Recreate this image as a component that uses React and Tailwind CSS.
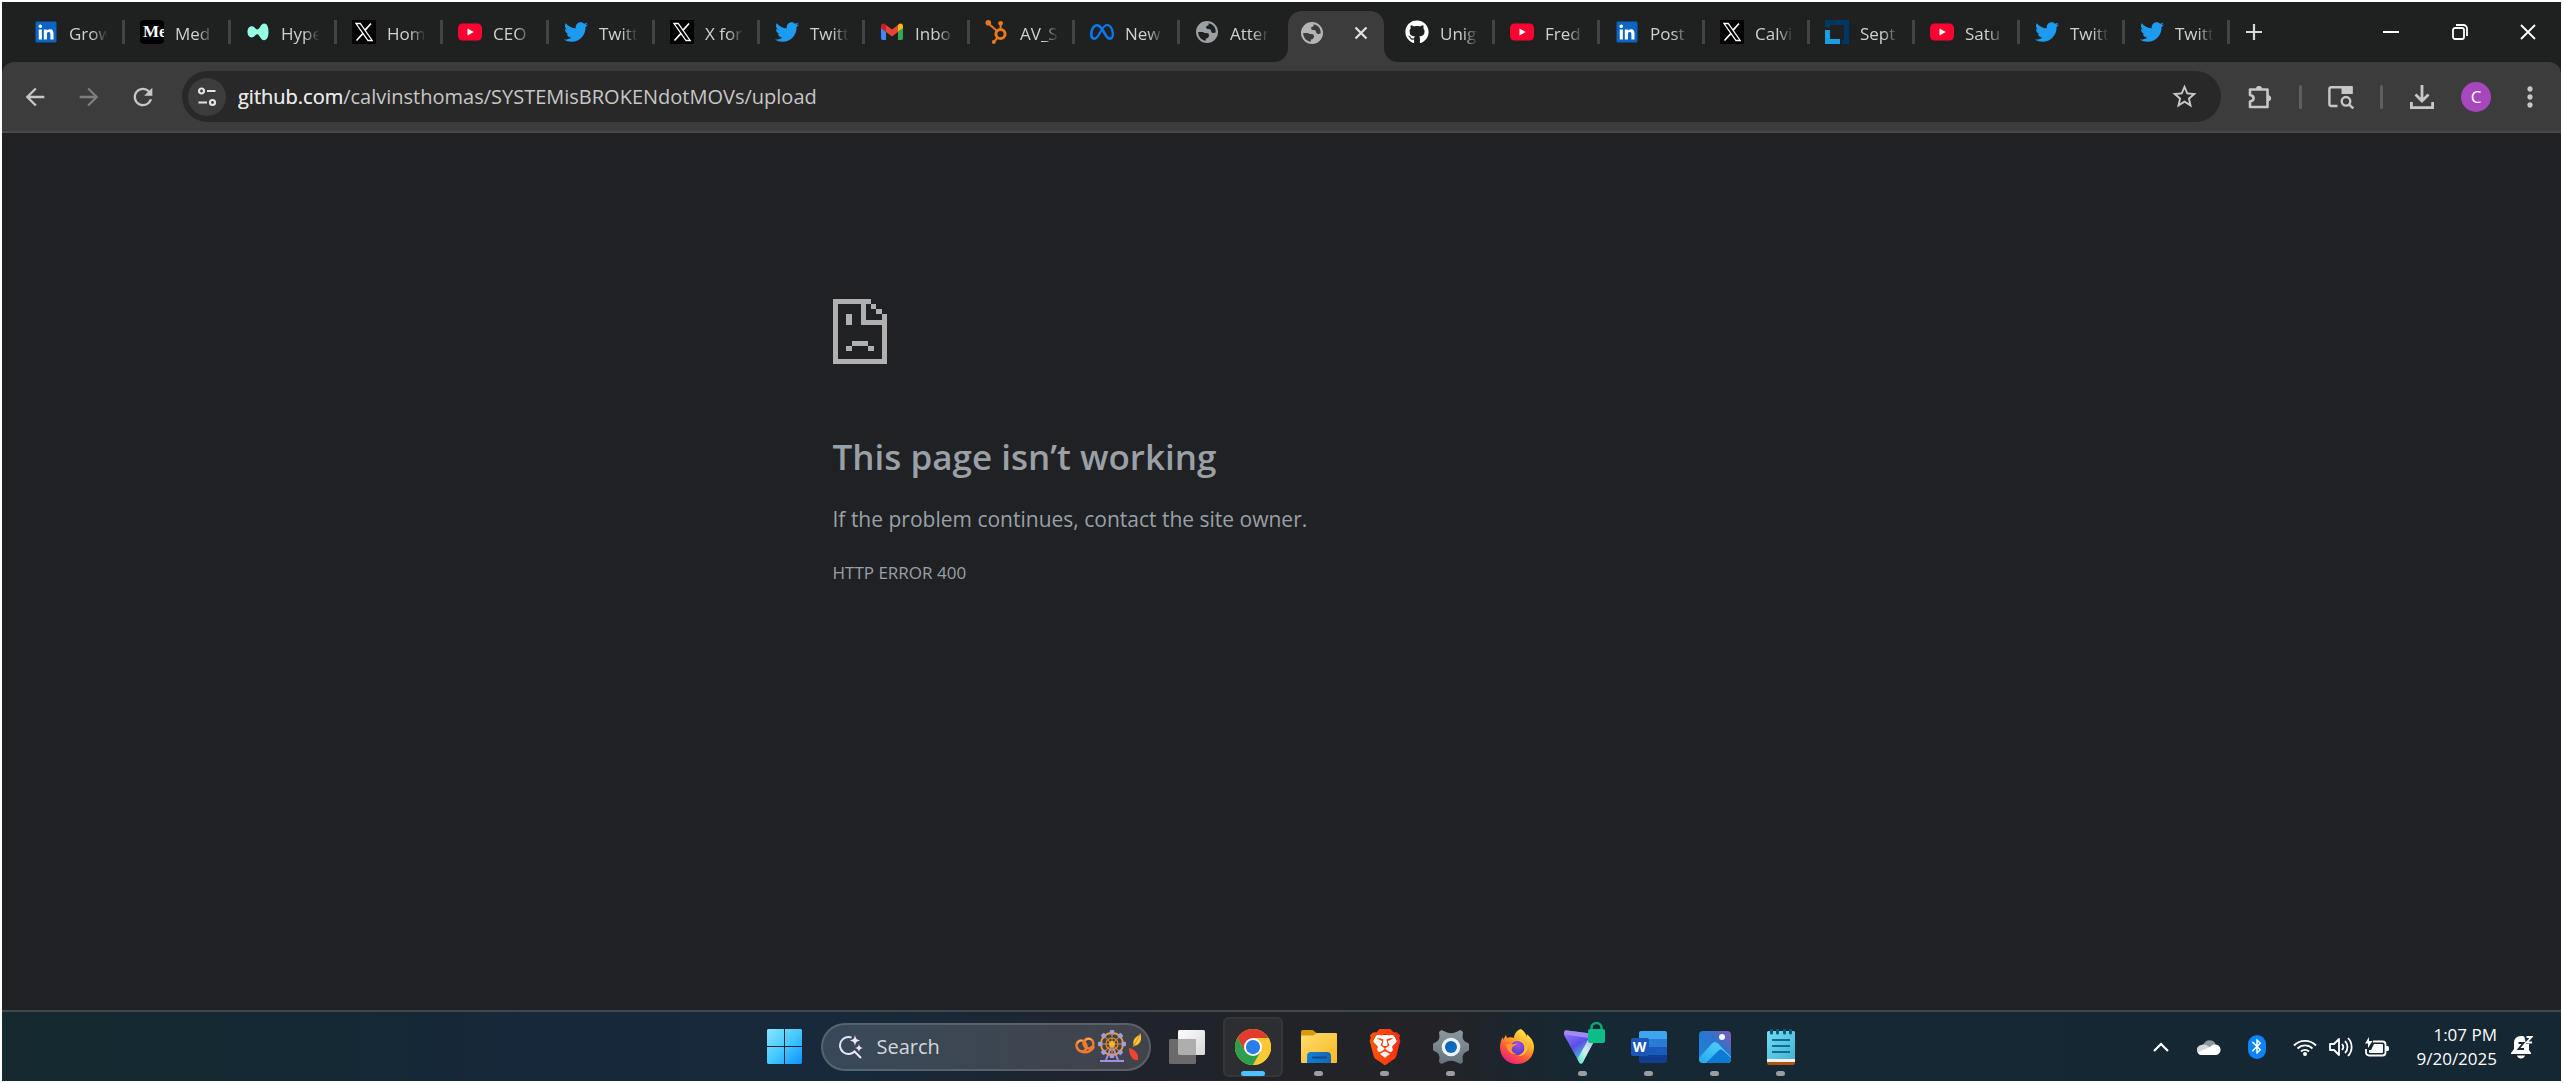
import React from "react";
import { FaLinkedin, FaTwitter, FaMeta, FaGithub } from "react-icons/fa6";
import { SiBrave } from "react-icons/si";
import {
  MdArrowBack, MdArrowForward, MdRefresh, MdStarOutline,
  MdMoreVert, MdBluetooth,
} from "react-icons/md";

/* ---------- favicons ---------- */

const LinkedIn = () => (
  <span className="flex size-6 items-center justify-center">
    <svg viewBox="0 0 24 24" className="size-6">
      <rect x="4" y="4" width="16" height="16" fill="#fff" />
      <FaLinkedin x="0" y="0" size={24} color="#0a66c2" />
    </svg>
  </span>
);

const Medium = () => (
  <span className="flex size-6 items-center overflow-hidden rounded bg-black pl-[3px] font-[Liberation_Serif,serif] text-[17px] leading-6 font-bold text-white">
    Me
  </span>
);

const Hyper = () => (
  <svg viewBox="0 0 24 24" className="size-6">
    <path
      fill="#97fce4"
      d="M22.500 11.800c0 5.200-1.500 8.400-4.400 8.400-3.700 0-4.300-6-6.900-6-2.200 0-2.200 3.200-5.400 3.200C3.200 17.400 1.500 15 1.500 11.700c0-3.400 1.800-5.500 4.300-5.500 3 0 3.300 3.200 5.500 3.200 2.700 0 3.200-5.800 6.900-5.800 2.800 0 4.300 3.200 4.300 8.200z"
    />
  </svg>
);

const XLogo = () => (
  <svg viewBox="0 0 24 24" className="size-6">
    <rect width="24" height="24" fill="#000" />
    <g fill="none" stroke="#fff" strokeWidth="1.300">
      <path d="M4 3.500h4.200l12 17h-4.200z" />
      <path d="M19 3.500 12.900 10.400M11 13.400 4.500 20.500" strokeWidth="1.600" />
    </g>
  </svg>
);

const YouTube = () => (
  <svg viewBox="0 0 24 24" className="size-6">
    <rect y="3.500" width="24" height="17" rx="4.500" fill="#ff0033" />
    <path d="M9.500 8.400v7.200l6.300-3.600z" fill="#fff" />
  </svg>
);

const Twitter = () => <FaTwitter size={24} color="#1d9bf0" />;

const Gmail = () => (
  <svg viewBox="0 0 24 24" className="size-6">
    <path d="M1 7v11.300c0 1 .8 1.700 1.700 1.700H6V11z" fill="#4285f4" />
    <path d="M18 11v9h3.300c1 0 1.700-.8 1.700-1.700V7z" fill="#34a853" />
    <path d="M18 5v6.500L23 8V6c0-2.300-2.300-3.300-4-2z" fill="#fbbc04" />
    <path d="M6 12V5l6 4.600L18 5v7l-6 4.500z" fill="#ea4335" />
    <path d="M1 6v2l5 4V5L5 4C3.300 2.700 1 3.700 1 6z" fill="#c5221f" />
  </svg>
);

const HubSpot = () => (
  <svg viewBox="0 0 24 24" className="size-6" fill="none" stroke="#e8791c">
    <circle cx="15.500" cy="14" r="4.600" strokeWidth="3" />
    <path d="M15.600 9V4M12 11 4 4M12.300 18l-3.500 4" strokeWidth="2" />
    <g fill="#e8791c" stroke="none">
      <circle cx="3.300" cy="2.800" r="2.800" />
      <circle cx="15.600" cy="3.300" r="2.400" />
      <circle cx="8.800" cy="22" r="2" />
    </g>
  </svg>
);

const Meta = () => <FaMeta size={24} color="#0a78f1" />;
const GitHub = () => <FaGithub size={24} color="#ffffff" />;

const Globe = () => (
  <svg viewBox="-1 -1 24 24" className="size-6" fill="currentColor" fillRule="evenodd">
    <path d="M11 0a11 11 0 1 1 0 22 11 11 0 0 1 0-22zM12.500 2.200c.6 1.200 0 2.300-1.300 2.600-1 .3-1.200 1-1 2 .1.900 1 1.200 2.300 1.200 1.700 0 2.500.8 2.700 2.200.3 1.700 2 2.300 4.500 1.300C20 6.500 17 3 12.500 2.200zM2.200 11c0 4.600 3.300 8.200 7.600 8.800v-2.200c2.200-.2 3.200-1.300 3.200-3.300 0-1.500-.9-2.300-2.600-2.300H8.500l-1.500-1z" />
  </svg>
);

const Squares = () => (
  <svg viewBox="0 0 24 24" className="size-6">
    <path d="M0 0h24v24h-7v-4h2V5H5v2H0z" fill="#003764" />
    <path d="M0 10h5v9h10v5H0z" fill="#1b9de2" />
  </svg>
);

/* ---------- tabs ---------- */

const TABS = [
  { icon: LinkedIn, label: "Grow", wide: true },
  { icon: Medium, label: "Med", wide: true },
  { icon: Hyper, label: "Hype", wide: true },
  { icon: XLogo, label: "Hom", wide: true },
  { icon: YouTube, label: "CEO", wide: true },
  { icon: Twitter, label: "Twitt", wide: true },
  { icon: XLogo, label: "X for" },
  { icon: Twitter, label: "Twitt" },
  { icon: Gmail, label: "Inbo" },
  { icon: HubSpot, label: "AV_S" },
  { icon: Meta, label: "New" },
  { icon: Globe, label: "Atter", bare: true },
  { icon: Globe, label: "", active: true },
  { icon: GitHub, label: "Unig" },
  { icon: YouTube, label: "Fred" },
  { icon: LinkedIn, label: "Post" },
  { icon: XLogo, label: "Calvi" },
  { icon: Squares, label: "Sept" },
  { icon: YouTube, label: "Satu" },
  { icon: Twitter, label: "Twitt" },
  { icon: Twitter, label: "Twitt" },
];

function Tab({ icon: Icon, label, wide, bare }) {
  return (
    <div className={`flex shrink-0 items-center ${wide ? "w-[106px]" : "w-[105px]"}`}>
      <button className="flex min-w-0 flex-1 items-center pl-[15px] text-[#9aa0a6]">
        <span className="flex size-6 shrink-0 items-center justify-center">
          <Icon />
        </span>
        <span className="mt-1 ml-[11px] w-[42px] text-left text-[17px] leading-6 whitespace-nowrap text-[#cfd1d0] [mask-image:linear-gradient(to_right,black_55%,transparent_92%)]">
          {label}
        </span>
      </button>
      <span className={`h-6 w-[3px] ${bare ? "" : "bg-[#434443]"}`} />
    </div>
  );
}

function ActiveTab() {
  return (
    <div className="flex w-[105px] shrink-0 items-end pr-1.5 pl-[3px]">
      <div className="relative flex h-[51px] flex-1 items-center justify-between rounded-t-[14px] bg-[#3c3c3c] pr-4 pb-2 pl-3 text-[#b5b5b5] before:absolute before:bottom-0 before:-left-[28px] before:h-[14px] before:w-[28px] before:rounded-br-[14px] before:shadow-[14px_0_0_0_#3c3c3c] before:[clip-path:inset(0_-14px_0_14px)] after:absolute after:-right-[28px] after:bottom-0 after:h-[14px] after:w-[28px] after:rounded-bl-[14px] after:shadow-[-14px_0_0_0_#3c3c3c] after:[clip-path:inset(0_14px_0_-14px)]">
        <Globe />
        <button aria-label="Close tab">
          <svg viewBox="0 0 14 14" className="size-3.5" stroke="#e3e3e3" strokeWidth="2.200">
            <path d="M1.500 1.500l11 11M12.500 1.500l-11 11" />
          </svg>
        </button>
      </div>
    </div>
  );
}

function TabStrip() {
  return (
    <div className="flex h-[60px] bg-[#1f2120]">
      <div className="flex min-w-0 pl-[17px]">
        {TABS.map((t, i) => (t.active ? <ActiveTab key={i} /> : <Tab key={i} {...t} />))}
        <button aria-label="New tab" className="flex w-12 items-center justify-center">
          <svg viewBox="0 0 16 16" className="size-4" stroke="#d8d8d8" strokeWidth="2.200">
            <path d="M8 0v16M0 8h16" />
          </svg>
        </button>
      </div>
      <div className="ml-auto flex">
        <button aria-label="Minimize" className="flex w-[69px] items-center justify-center">
          <span className="h-0.5 w-4 bg-white" />
        </button>
        <button aria-label="Restore" className="flex w-[69px] items-center justify-center">
          <svg viewBox="0 0 16 16" className="size-4" fill="none" stroke="#fff" strokeWidth="1.800">
            <rect x="1" y="4" width="11" height="11" rx="2" />
            <path d="M4 1h7.500A3.500 3.500 0 0 1 15 4.500V12" />
          </svg>
        </button>
        <button aria-label="Close" className="flex w-[67px] items-center justify-center">
          <svg viewBox="0 0 16 16" className="size-4" stroke="#fff" strokeWidth="1.800">
            <path d="M1 1l14 14M15 1L1 15" />
          </svg>
        </button>
      </div>
    </div>
  );
}

/* ---------- toolbar ---------- */

const ToolButton = ({ label, children }) => (
  <button aria-label={label} className="flex h-12 w-[54px] shrink-0 items-center justify-center text-[#c7c7c7]">
    {children}
  </button>
);

const Divider = () => <span className="mx-3 h-6 w-[3px] shrink-0 rounded bg-[#5f5f5f]" />;

function Toolbar() {
  return (
    <div className="bg-[#1f2120]">
      <div className="flex h-[71px] items-center rounded-t-[12px] border-b-2 border-[#4a4a4a] bg-[#3c3c3c] pr-1 pl-1.5">
        <ToolButton label="Back"><MdArrowBack size={28} /></ToolButton>
        <ToolButton label="Forward"><MdArrowForward size={28} color="#7d7d7d" /></ToolButton>
        <ToolButton label="Reload"><MdRefresh size={28} /></ToolButton>
        <div className="mr-3 ml-3 flex h-[51px] min-w-0 flex-1 items-center rounded-full bg-[#282828] pr-[22px] pl-1.5">
          <button aria-label="View site information" className="flex size-[38px] shrink-0 items-center justify-center rounded-full bg-[#3c3c3c]">
            <svg viewBox="0 0 20 20" className="size-5" fill="none" stroke="#e3e3e3" strokeWidth="2.200">
              <circle cx="4.500" cy="4" r="2.500" />
              <path d="M10 4h8.500M1.500 15.500H10" />
              <circle cx="15.500" cy="15.500" r="2.500" />
            </svg>
          </button>
          <label className="relative ml-3 flex-1 text-[20px] leading-7 text-[#c7c7c7]">
            <input
              aria-label="Address bar"
              readOnly
              className="w-full bg-transparent outline-none"
              value="github.com/calvinsthomas/SYSTEMisBROKENdotMOVs/upload"
            />
            <span aria-hidden="true" className="pointer-events-none absolute inset-y-0 left-0 text-[#e8e8e8]">
              github.com
            </span>
          </label>
          <button aria-label="Bookmark this tab" className="text-[#c7c7c7]">
            <MdStarOutline size={29} />
          </button>
        </div>
        <ToolButton label="Extensions">
          <svg viewBox="0 0 24 24" className="size-6" fill="none" stroke="currentColor" strokeWidth="2.600" strokeLinejoin="round">
            <path d="M2 4.500h17.500v17.500H2v-5.500c2.600-.4 3.600-1.600 3.600-3.300S4.600 10.400 2 10z" />
            <path d="M8.300 4a2.700 2.700 0 0 1 5.400 0z M20 10.600a2.700 2.700 0 0 1 0 5.400z" fill="currentColor" strokeWidth="1" />
          </svg>
        </ToolButton>
        <Divider />
        <ToolButton label="Search with Lens">
          <svg viewBox="0 0 26 24" className="h-6 w-[26px]" fill="none" stroke="currentColor" strokeWidth="2.400">
            <path d="M9.500 21H3.200A1.800 1.800 0 0 1 1.400 19.200V4A1.800 1.800 0 0 1 3.200 2.200h20.300v6.500" />
            <path d="M13.500 2h11v7h-11z" fill="currentColor" stroke="none" />
            <circle cx="18" cy="16.300" r="4.300" />
            <path d="M21 19.300l4.300 4.200" />
          </svg>
        </ToolButton>
        <Divider />
        <ToolButton label="Downloads">
          <svg viewBox="0 0 24 24" className="size-6" fill="none" stroke="currentColor" strokeWidth="2.800">
            <path d="M12 0v15M5.500 9.500 12 16l6.500-6.500M1.400 17v5.600h21.200V17" />
          </svg>
        </ToolButton>
        <ToolButton label="Profile">
          <span className="flex size-[30px] items-center justify-center rounded-full bg-[#a846bd] text-[17px] leading-6 text-white">C</span>
        </ToolButton>
        <ToolButton label="Menu"><MdMoreVert size={32} /></ToolButton>
      </div>
    </div>
  );
}

/* ---------- page ---------- */

function ErrorPage() {
  return (
    <main className="flex-1 bg-[#202124] text-[#9aa0a6]">
      <div className="mx-auto w-full max-w-[898px] pt-[166px]">
        <svg viewBox="0 0 54 65" className="h-[65px] w-[54px]" fill="#b0b0b0" shapeRendering="crispEdges">
          <path d="M0 0h38v5H5v55h44V15h5v50H0z" />
          <path d="M28 0h5v21h21v5H28zM38 5h5v5h-5zM43 10h6v5h-6z" />
          <path d="M13 15h6v11h-6zM19 42h16v5H19zM13 47h6v5h-6zM35 47h6v5h-6z" />
        </svg>
        <h1 className="mt-[69px] text-[35px] leading-[48px] font-semibold">This page isn’t working</h1>
        <p className="mt-[22px] text-[21px] leading-8">If the problem continues, contact the site owner.</p>
        <p className="mt-[26px] text-[17px] leading-6">HTTP ERROR 400</p>
      </div>
    </main>
  );
}

/* ---------- taskbar icons ---------- */

const StartIcon = () => (
  <svg viewBox="0 0 35 35" className="size-[35px]">
    <defs>
      <linearGradient id="win" x1="0" y1="0" x2="35" y2="35" gradientUnits="userSpaceOnUse">
        <stop offset="0" stopColor="#8ae4ff" />
        <stop offset=".5" stopColor="#45c9ff" />
        <stop offset="1" stopColor="#0b93fb" />
      </linearGradient>
    </defs>
    <path fill="url(#win)" d="M1 0h16v17H0V1zM18 0h16l1 1v16H18zM0 18h17v17H1l-1-1zM18 18h17v16l-1 1H18z" />
  </svg>
);

const CopilotSearch = () => (
  <svg viewBox="0 0 24 24" className="size-6">
    <defs>
      <linearGradient id="cs" x1="0" y1="0" x2="24" y2="24" gradientUnits="userSpaceOnUse">
        <stop offset="0" stopColor="#cfe4ff" />
        <stop offset="1" stopColor="#fbe6ff" />
      </linearGradient>
    </defs>
    <path d="M12.500 2.500A8.500 8.500 0 1 0 15.500 16.500L22 23" fill="none" stroke="url(#cs)" strokeWidth="2" />
    <path d="M16 0c.8 4 1.500 4.700 5.500 5.500-4 .8-4.700 1.500-5.500 5.500-.8-4-1.500-4.700-5.500-5.500 4-.8 4.700-1.500 5.500-5.500zM20 9c.6 2.700 1.300 3.400 4 4-2.700.6-3.400 1.300-4 4-.6-2.700-1.300-3.400-4-4 2.700-.6 3.400-1.300 4-4z" fill="#f6e3ff" />
  </svg>
);

const SPOKES = [0, 45, 90, 135, 180, 225, 270, 315];

const Festival = () => (
  <svg viewBox="0 0 66 34" className="h-[34px] w-[66px]">
    <g fill="none" stroke="#f47b2e" strokeWidth="2.600" strokeLinecap="round">
      <ellipse cx="6.500" cy="16" rx="4.800" ry="5.600" transform="rotate(-25 6.500 16)" />
      <ellipse cx="13.500" cy="13.500" rx="4.800" ry="5" transform="rotate(-25 13.500 13.500)" />
      <path d="M8 22c4 1 9-1 10.500-5" />
      <path d="M3 13c.7-2 2-3 4-2.600M11 10c1.500-1.500 3.500-1.500 5-.5" stroke="#ffb05c" strokeWidth="1.300" />
    </g>
    <path d="M31 30 37 15l6 15M25 31h24" fill="none" stroke="#a98ae8" strokeWidth="2" />
    <circle cx="37" cy="14" r="11" fill="none" stroke="#f09a25" strokeWidth="1.800" />
    <circle cx="37" cy="14" r="6" fill="none" stroke="#e58f24" strokeWidth="1.200" />
    {SPOKES.map((a) => (
      <g key={a} transform={`rotate(${a} 37 14)`}>
        <path d="M37 14V3" stroke="#e58f24" strokeWidth="1" />
        <rect x="34.800" y="0" width="4.500" height="4.500" rx="1" fill="#a39be0" />
      </g>
    ))}
    <circle cx="37" cy="14" r="3" fill="#ffb427" />
    <path d="M66 4c1 6-1 11-7 12-2-4 0-9 7-12z" fill="#ffc436" />
    <path d="M66 3 58 17" stroke="#d68a16" />
    <path d="M54 18c6 1 10 6 9 12-5 1-9-4-9-12z" fill="#ee4438" />
  </svg>
);

const TaskView = () => (
  <svg viewBox="0 0 36 34" className="h-[34px] w-9">
    <defs>
      <linearGradient id="tv" x1="0" y1="0" x2="1" y2="1">
        <stop offset="0" stopColor="#fff" />
        <stop offset="1" stopColor="#d6d6d6" />
      </linearGradient>
    </defs>
    <rect x="9" y="0" width="27" height="25" rx="1.500" fill="url(#tv)" />
    <rect x="0" y="9" width="27" height="25" rx="1.500" fill="#6a6a6a" />
    <path d="M9 9h17l1 1v15H10l-1-1z" fill="#aeaeae" />
  </svg>
);

const Chrome = () => (
  <svg viewBox="0 0 48 48" className="size-9">
    <circle cx="24" cy="24" r="24" fill="#fbc934" />
    <path d="M3.200 12A24 24 0 0 1 44.800 12H24l-10.400 18z" fill="#e33b2e" />
    <path d="M3.200 12A24 24 0 0 0 24 48L34.400 30 24 34 13.600 30z" fill="#2f9e4f" />
    <path d="M34.400 30 24 48A24 24 0 0 0 44.800 12H24z" fill="#fbc934" />
    <circle cx="24" cy="24" r="12" fill="#fff" />
    <circle cx="24" cy="24" r="9.500" fill="#2b7de9" />
  </svg>
);

const Explorer = () => (
  <svg viewBox="0 0 36 33" className="h-[33px] w-9">
    <defs>
      <linearGradient id="fo" x1="0" y1="0" x2="1" y2="1">
        <stop offset="0" stopColor="#ffdc70" />
        <stop offset="1" stopColor="#f8b91f" />
      </linearGradient>
      <linearGradient id="fb" x1="0" y1="0" x2="1" y2="0">
        <stop offset="0" stopColor="#0f7fd6" />
        <stop offset="1" stopColor="#1565b5" />
      </linearGradient>
    </defs>
    <path d="M0 2a2 2 0 0 1 2-2h9c2 0 4 3 6 4v6H0z" fill="#db9a0c" />
    <path d="M0 5.500h12l4-2.500h19a1 1 0 0 1 1 1v28a1 1 0 0 1-1 1H1a1 1 0 0 1-1-1z" fill="url(#fo)" />
    <path d="M6 33v-7a4 4 0 0 1 4-4h16a4 4 0 0 1 4 4v7z" fill="url(#fb)" />
    <path d="M12 27.500h13" stroke="#0c4a8a" strokeWidth="2" strokeLinecap="round" />
  </svg>
);

const Brave = () => (
  <svg viewBox="0 0 24 24" className="size-9">
    <defs>
      <linearGradient id="br" x1="0" y1="0" x2="24" y2="0" gradientUnits="userSpaceOnUse">
        <stop offset="0" stopColor="#ff5a00" />
        <stop offset="1" stopColor="#ff2a1a" />
      </linearGradient>
    </defs>
    <path d="M6 4h12l2 4-3 10-5 4-5-4L4 8z" fill="#fff" />
    <SiBrave x="0" y="0" size={24} className="fill-[url(#br)]" />
  </svg>
);

const Settings = () => (
  <svg viewBox="-18 -18 36 36" className="size-9">
    <defs>
      <linearGradient id="gr" x1="0" y1="0" x2="0" y2="1">
        <stop offset="0" stopColor="#8d979f" />
        <stop offset="1" stopColor="#66727c" />
      </linearGradient>
      <linearGradient id="gb" x1="0" y1="0" x2="1" y2="1">
        <stop offset="0" stopColor="#0b5fae" />
        <stop offset="1" stopColor="#0c74c9" />
      </linearGradient>
    </defs>
    <path
      fill="url(#gr)"
      d="M-9.500-17-4-14.500Q0-13 4-14.500L9.500-17 12-15 11.500-10Q12-5.500 17-4L18-3V3L17 4Q12 5.500 11.500 10L12 15 9.500 17 4 14.500Q0 13-4 14.500L-9.500 17-12 15-11.500 10Q-12 5.500-17 4L-18 3V-3L-17-4Q-12-5.500-11.500-10L-12-15z"
    />
    <circle r="9.300" fill="#eef1f3" />
    <circle r="6" fill="url(#gb)" />
  </svg>
);

const Firefox = () => (
  <svg viewBox="0 0 34 35" className="h-[35px] w-[34px]">
    <defs>
      <linearGradient id="f1" x1=".8" y1="0" x2=".2" y2="1">
        <stop offset="0" stopColor="#fff44f" />
        <stop offset=".35" stopColor="#ffb02e" />
        <stop offset=".65" stopColor="#ff5a36" />
        <stop offset="1" stopColor="#e9158a" />
      </linearGradient>
      <radialGradient id="f2" cx=".55" cy=".3" r=".8">
        <stop offset="0" stopColor="#a24bef" />
        <stop offset="1" stopColor="#4a3dc4" />
      </radialGradient>
    </defs>
    <path d="M21 0c3 2 5 5 6 8 0-1 0-2-.500-3C32 9 34 14 34 18c0 10-7 17-17 17S0 28 0 18c0-4 1.500-8 3-10 0 1 0 2 .5 2.500C4.500 8 6 6 6 6l1 3c2-1 5-1 7 0 0-4 3-8 7-9z" fill="url(#f1)" />
    <circle cx="17.500" cy="19" r="7" fill="url(#f2)" />
    <path d="M6 15c3-1 5 1 8 0 2 0 3-1 3.500-2 0 3-3 3.500-5 5-2 3 0 6 4 7-6 1-10-4-10.500-10z" fill="#ff9a32" />
    <path d="M17 11c6-1 9 3 8 8 1-1 2-3 2-5 2 7-2 13-9 13 5-2 8-6 6-11-1-3-4-4-7-5z" fill="#ffc43a" />
  </svg>
);

const Proton = () => (
  <svg viewBox="0 0 42 42" className="size-[42px] overflow-visible">
    <defs>
      <linearGradient id="p1" x1="0" y1="0" x2=".6" y2="1">
        <stop offset="0" stopColor="#9a7bff" />
        <stop offset=".5" stopColor="#5b4fe8" />
        <stop offset="1" stopColor="#3fe0d0" />
      </linearGradient>
      <linearGradient id="p2" x1="1" y1="0" x2="0" y2="1">
        <stop offset="0" stopColor="#b9a4f5" />
        <stop offset=".6" stopColor="#c8f2ee" />
        <stop offset="1" stopColor="#54e3c8" />
      </linearGradient>
    </defs>
    <path d="M2 7c0-2 1-3 3-2.500l24 3c3 .5 5 3 3 6L21 36c-1 2-3 2-4 0L2 9z" fill="url(#p1)" />
    <path d="M34 12 21 36c-1 2-3 2-4 0l-1.500-3L27 12c2-3 5-3 7 0z" fill="url(#p2)" />
    <path d="M5 4.500l24 3c2 1 2 3 1 5L3 8.500c-2-2 0-4 2-4z" fill="#a28af2" />
    <path d="M29.500 4V2a5 5 0 0 1 10 0v2" fill="none" stroke="#0aa874" strokeWidth="2.500" />
    <rect x="26" y="3" width="17" height="14" rx="2" fill="#0bbd86" />
  </svg>
);

const Word = () => (
  <span className="relative flex h-8 w-9 justify-end">
    <span className="flex w-7 flex-col overflow-hidden rounded-[2px]">
      <span className="h-2 bg-[#41a5ee]" />
      <span className="h-2 bg-[#2b7cd3]" />
      <span className="h-2 bg-[#185abd]" />
      <span className="h-2 bg-[#103f91]" />
    </span>
    <span className="absolute top-[7px] left-0 flex size-[18px] items-center justify-center rounded-[2px] bg-[#1a57bd] font-[Open_Sans,sans-serif] text-[14px] leading-none font-bold text-white">
      W
    </span>
  </span>
);

const Photos = () => (
  <svg viewBox="0 0 32 32" className="size-8">
    <defs>
      <linearGradient id="ph" x1="0" y1="1" x2="1" y2="0">
        <stop offset="0" stopColor="#1a86dd" />
        <stop offset=".6" stopColor="#2b74cc" />
        <stop offset="1" stopColor="#8a57b5" />
      </linearGradient>
      <linearGradient id="pm" x1="0" y1="1" x2="1" y2="0">
        <stop offset="0" stopColor="#24a8ef" />
        <stop offset="1" stopColor="#56d8fb" />
      </linearGradient>
      <clipPath id="pc"><rect width="32" height="32" rx="4" /></clipPath>
    </defs>
    <g clipPath="url(#pc)">
      <rect width="32" height="32" fill="url(#ph)" />
      <path d="M0 27 13 12.500c2-2 4-2 6 0L32 26v6H0z" fill="url(#pm)" />
      <path d="M7 32 19.500 19.500c1.500-1.500 3-1.500 4.500 0L32 27v5z" fill="#0f7ad4" />
    </g>
    <circle cx="23" cy="6" r="3" fill="#f4f6ff" />
  </svg>
);

const Notepad = () => (
  <svg viewBox="0 0 28 36" className="h-9 w-7">
    <defs>
      <linearGradient id="np" x1="0" y1="0" x2="1" y2="1">
        <stop offset="0" stopColor="#74dcf4" />
        <stop offset="1" stopColor="#45b3d6" />
      </linearGradient>
    </defs>
    <path d="M0 32h28v2a2 2 0 0 1-2 2H2a2 2 0 0 1-2-2z" fill="#b3530f" />
    <path d="M0 29h28v4H0z" fill="#f2f2f2" />
    <path d="M0 3.500A1.500 1.500 0 0 1 1.500 2h25A1.500 1.500 0 0 1 28 3.500V30H0z" fill="url(#np)" />
    <path d="M5 11h18M5 17h18M5 23h18" stroke="#0f6d8e" strokeWidth="2" />
    <path d="M4.500 1v3M10.500 1v3M17.500 1v3M23.500 1v3" stroke="#0b5873" strokeWidth="3" strokeLinecap="round" />
  </svg>
);

const APPS = [
  { name: "Task View", icon: TaskView },
  { name: "Google Chrome", icon: Chrome, active: true },
  { name: "File Explorer", icon: Explorer, open: true },
  { name: "Brave", icon: Brave, open: true },
  { name: "Settings", icon: Settings, open: true },
  { name: "Firefox", icon: Firefox },
  { name: "Proton VPN", icon: Proton, open: true },
  { name: "Word", icon: Word, open: true },
  { name: "Photos", icon: Photos, open: true },
  { name: "Notepad", icon: Notepad, open: true },
];

/* ---------- taskbar ---------- */

function AppButton({ name, icon: Icon, active, open }) {
  return (
    <button
      aria-label={name}
      className={`relative mx-[3px] flex size-[60px] items-center justify-center rounded-md border-2 ${
        active ? "border-[#36373b] bg-[#2d2e32]" : "border-transparent"
      }`}
    >
      <Icon />
      {active && <span className="absolute -bottom-px h-[5px] w-6 rounded-full bg-[#4cc2ff]" />}
      {open && <span className="absolute -bottom-px h-[5px] w-[9px] rounded-full bg-[#9b9da1]" />}
    </button>
  );
}

function Tray() {
  return (
    <div className="flex items-center justify-end pr-7 text-white">
      <button aria-label="Show hidden icons" className="flex w-12 justify-center">
        <svg viewBox="0 0 16 10" className="h-2.5 w-4" fill="none" stroke="#fff" strokeWidth="2.200">
          <path d="M1 9l7-7 7 7" />
        </svg>
      </button>
      <button aria-label="OneDrive" className="flex w-12 justify-center">
        <svg viewBox="0 0 24 16" className="h-4 w-6">
          <path d="M6.500 5.500A6.500 6.500 0 0 1 18.500 5L17 10 7 8z" fill="#8f9aa0" />
          <path d="M5 16a5 5 0 0 1-.5-10c3-1 5 0 7 1.500L20 12l-3 4z" fill="#d5d9db" />
          <path d="M17.500 5.500A5.300 5.300 0 0 1 19 16H5c-2 0-3.500-1-4.300-2.500L13 8c1.500-1.500 3-2.500 4.500-2.500z" fill="#fff" />
        </svg>
      </button>
      <button aria-label="Bluetooth" className="flex w-12 justify-center">
        <span className="flex h-6 w-[18px] items-center justify-center rounded-[9px] bg-[#0a84ff]">
          <MdBluetooth size={21} />
        </span>
      </button>
      <button aria-label="Network, volume and battery" className="mx-1.5 flex items-center gap-3 px-1.5">
        <svg viewBox="0 0 24 18" className="h-[18px] w-6" fill="none" stroke="#fff" strokeWidth="1.900">
          <path d="M1 7.500a15.500 15.500 0 0 1 22 0M4.500 10.500a10.500 10.500 0 0 1 15 0M8 13.500a5.700 5.700 0 0 1 8 0" />
          <circle cx="12" cy="16" r="2" fill="#fff" stroke="none" />
        </svg>
        <svg viewBox="0 0 24 20" className="h-5 w-6" fill="none" stroke="#fff" strokeWidth="1.800" strokeLinejoin="round">
          <path d="M1 7h4l5-5v16l-5-5H1z" />
          <path d="M13 7a4.500 4.500 0 0 1 0 6M16 4a8.500 8.500 0 0 1 0 12M19 1a13 13 0 0 1 0 18" />
        </svg>
        <svg viewBox="0 0 24 20" className="h-5 w-6">
          <path d="M8 4.500h9.500a3 3 0 0 1 3 3v8a3 3 0 0 1-3 3H4a3 3 0 0 1-3-3V12" fill="none" stroke="#fff" strokeWidth="1.800" />
          <path d="M9 7h8a1 1 0 0 1 1 1v7a1 1 0 0 1-1 1H5a1 1 0 0 1-1-1v-2h2zM21 9h1.500a1.500 1.500 0 0 1 1.500 1.500v2a1.500 1.500 0 0 1-1.500 1.500H21z" fill="#fff" />
          <path d="M4 0v4h3.500L3 11V6.500H0z" fill="#fff" />
        </svg>
      </button>
      <button className="ml-2 w-[88px] text-right text-[17px] leading-6">
        <time className="block">1:07 PM</time>
        <time className="block whitespace-nowrap">9/20/2025</time>
      </button>
      <button aria-label="Notifications" className="ml-3.5 flex">
        <svg viewBox="0 0 22 24" className="h-6 w-[22px]">
          <path d="M10 1C5.500 1 3 4 3 8v6l-3 4v1h20v-1l-2-3V9l-2-6C14 1.500 12 1 10 1zM6 20.500h8c-.5 2-2 3-4 3s-3.500-1-4-3z" fill="#fff" />
          <path d="M13 0h9v9h-7z" fill="#142733" />
          <path d="M7.500 8h5l-5 6h5.500" fill="none" stroke="#142733" strokeWidth="1.800" />
          <path d="M15.500 2h5l-5 5.500h5.500" fill="none" stroke="#fff" strokeWidth="1.800" />
        </svg>
      </button>
    </div>
  );
}

function Taskbar() {
  return (
    <footer className="grid h-[71px] grid-cols-[1fr_auto_1fr] items-center border-t-2 border-[#40494e] bg-[linear-gradient(to_right,#15292f_0%,#142934_12%,#17283a_20%,#17293b_33%,#20232b_45%,#232327_56%,#152833_62%,#142733_100%)] pl-0.5">
      <span />
      <div className="flex items-center">
        <button aria-label="Start" className="flex w-[69px] justify-center pr-[3px]"><StartIcon /></button>
        <label className="flex h-12 w-[330px] items-center rounded-full border-2 border-white/15 bg-white/15 pr-2 pl-4">
          <CopilotSearch />
          <input
            aria-label="Search"
            placeholder="Search"
            className="ml-3.5 w-0 flex-1 bg-transparent text-[20px] leading-7 outline-none placeholder:text-[#d3d7db]"
          />
          <Festival />
        </label>
        <div className="ml-[3px] flex">
          {APPS.map((a) => <AppButton key={a.name} {...a} />)}
        </div>
      </div>
      <Tray />
    </footer>
  );
}

export default function App() {
  return (
    <div className="flex min-h-screen flex-col bg-white p-0.5 font-[Open_Sans,Noto_Sans,sans-serif]">
      <header>
        <TabStrip />
        <Toolbar />
      </header>
      <ErrorPage />
      <Taskbar />
    </div>
  );
}
